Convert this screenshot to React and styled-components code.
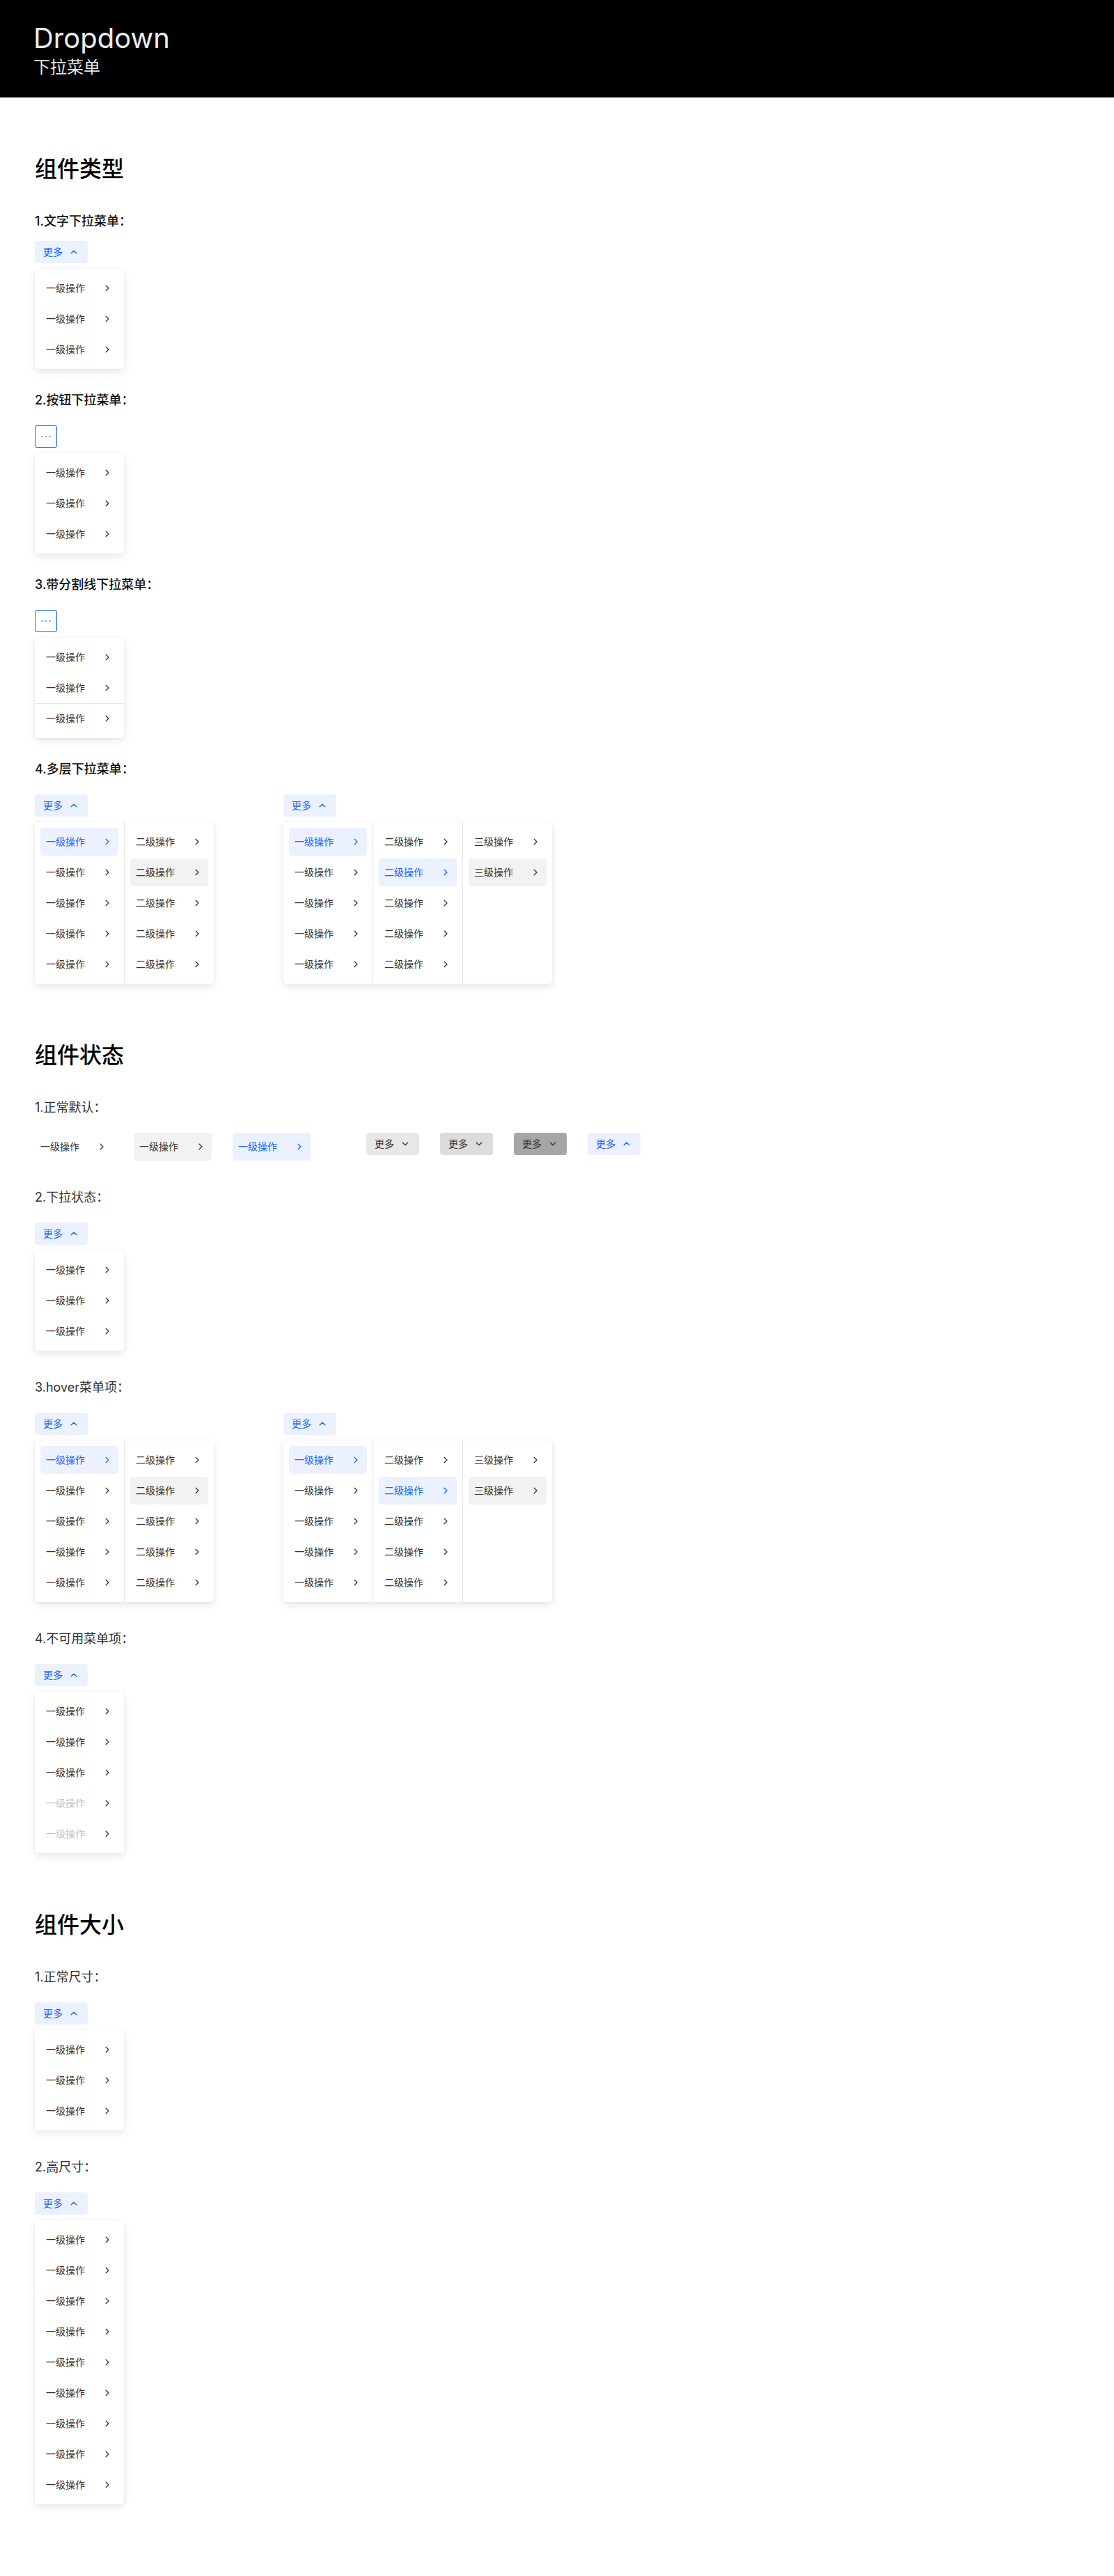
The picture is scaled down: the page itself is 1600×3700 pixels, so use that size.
import React from "react";
import styled, { createGlobalStyle, css } from "styled-components";

const BLUE = "#1664FF";
const BLUE_BG = "#EBF1FF";
const HOVER_BG = "#F2F2F2";
const TEXT = "#333333";
const DISABLED = "#C4C4C4";

const GlobalStyle = createGlobalStyle`
  * { box-sizing: border-box; }
  html, body { margin: 0; padding: 0; background: #fff; }
  body {
    font-family: Inter, "Noto Sans CJK SC", sans-serif;
    color: #000;
    -webkit-font-smoothing: antialiased;
  }
`;

const Header = styled.header`
  height: 140px;
  background: #000;
  padding: 31px 48px 0;
`;

const Title = styled.h1`
  margin: 0;
  font-size: 40px;
  line-height: 48px;
  font-weight: 400;
  color: #ececec;
`;

const Subtitle = styled.div`
  margin-top: 2px;
  font-size: 24px;
  line-height: 32px;
  font-weight: 400;
  color: #e6e6e6;
`;

const Main = styled.main`
  padding: 0 50px 80px;
`;

const Section = styled.section`
  display: flex;
  flex-direction: column;
  padding-top: 81px;
`;

const SectionTitle = styled.h2`
  margin: 0 0 40px;
  height: 44px;
  font-size: 32px;
  line-height: 44px;
  font-weight: 500;
  color: #000;
`;

const DemoList = styled.div`
  display: flex;
  flex-direction: column;
  gap: ${(p) => p.$gap}px;
`;

const Demo = styled.div`
  display: flex;
  flex-direction: column;
  align-items: flex-start;
  gap: ${(p) => p.$labelGap ?? 23}px;
`;

const Label = styled.div`
  height: 26px;
  font-size: 18px;
  line-height: 26px;
  font-weight: ${(p) => (p.$strong ? 500 : 400)};
  color: ${(p) => (p.$strong ? "#111" : "#333")};
`;

const DropWrap = styled.div`
  display: flex;
  flex-direction: column;
  align-items: flex-start;
  gap: 8px;
`;

const DemoRow = styled.div`
  display: flex;
  align-items: flex-start;
  gap: ${(p) => p.$gap || 30}px;
`;

const Group = styled.div`
  display: flex;
  align-items: center;
  gap: 30px;
`;

const buttonVariants = {
  open: css`
    background: ${BLUE_BG};
    color: ${BLUE};
  `,
  default: css`
    background: #e8e8e8;
    color: ${TEXT};
  `,
  hover: css`
    background: #dcdcdc;
    color: ${TEXT};
  `,
  pressed: css`
    background: #a6a6a6;
    color: ${TEXT};
  `,
};

const MoreButton = styled.button`
  display: inline-flex;
  align-items: center;
  gap: 8px;
  height: 32px;
  padding: 0 12px;
  border: none;
  border-radius: 4px;
  font-family: inherit;
  font-size: 14px;
  line-height: 22px;
  cursor: pointer;
  ${(p) => buttonVariants[p.$variant || "open"]}
`;

const IconButton = styled.button`
  display: inline-flex;
  align-items: center;
  justify-content: center;
  width: 32px;
  height: 32px;
  padding: 0;
  border: 1px solid ${BLUE};
  border-radius: 3px;
  background: #fff;
  color: #3a7cff;
  cursor: pointer;
`;

const Menu = styled.div`
  display: inline-flex;
  align-items: stretch;
  background: #fff;
  border-radius: 4px;
  box-shadow: 0 0 1px rgba(0, 0, 0, 0.14), 0 4px 12px rgba(0, 0, 0, 0.1);
`;

const Column = styled.div`
  display: flex;
  flex-direction: column;
  gap: 4px;
  width: 128px;
  padding: 8px;

  & + & {
    width: 129px;
    border-left: 1px solid #e6e6e6;
  }
`;

const itemStates = {
  normal: css`
    background: transparent;
    color: ${TEXT};
  `,
  hover: css`
    background: ${HOVER_BG};
    color: ${TEXT};
  `,
  active: css`
    background: ${BLUE_BG};
    color: ${BLUE};
  `,
  disabled: css`
    background: transparent;
    color: ${DISABLED};
  `,
};

const Item = styled.div`
  display: flex;
  align-items: center;
  justify-content: space-between;
  width: 112px;
  height: 40px;
  padding: 0 8px;
  border-radius: 4px;
  font-size: 14px;
  line-height: 22px;
  flex-shrink: 0;
  ${(p) => itemStates[p.$state || "normal"]}
`;

const Arrow = styled.span`
  display: inline-flex;
  width: 16px;
  height: 16px;
  color: ${(p) => (p.$state === "active" ? BLUE : TEXT)};
`;

const Divider = styled.div`
  height: 1px;
  margin: -2px -8px -3px;
  background: #e6e6e6;
`;

const ChevronRight = () => (
  <svg width="16" height="16" viewBox="0 0 16 16" fill="none">
    <path d="M6.2 4.2L10 8l-3.8 3.8" stroke="currentColor" strokeWidth="1.3" strokeLinecap="round" strokeLinejoin="round" />
  </svg>
);

const ChevronUp = () => (
  <svg width="16" height="16" viewBox="0 0 16 16" fill="none">
    <path d="M4.2 9.8L8 6.2l3.8 3.6" stroke="currentColor" strokeWidth="1.4" strokeLinecap="round" strokeLinejoin="round" />
  </svg>
);

const ChevronDown = () => (
  <svg width="16" height="16" viewBox="0 0 16 16" fill="none">
    <path d="M4.4 6.2L8 9.8l3.6-3.6" stroke="currentColor" strokeWidth="1.3" strokeLinecap="round" strokeLinejoin="round" />
  </svg>
);

const Dots = () => (
  <svg width="16" height="16" viewBox="0 0 16 16" fill="currentColor">
    <circle cx="2.5" cy="8" r="1" />
    <circle cx="8" cy="8" r="1" />
    <circle cx="13.5" cy="8" r="1" />
  </svg>
);

const MenuItem = ({ text, state = "normal" }) => (
  <Item $state={state}>
    <span>{text}</span>
    <Arrow $state={state}>
      <ChevronRight />
    </Arrow>
  </Item>
);

const More = ({ variant = "open" }) => (
  <MoreButton $variant={variant}>
    <span>更多</span>
    {variant === "open" ? <ChevronUp /> : <ChevronDown />}
  </MoreButton>
);

const L1 = "一级操作";
const L2 = "二级操作";
const L3 = "三级操作";

const SimpleMenu = ({ count = 3, states = {}, dividerBefore }) => (
  <Menu>
    <Column>
      {Array.from({ length: count }).map((_, i) => (
        <React.Fragment key={i}>
          {dividerBefore === i && <Divider />}
          <MenuItem text={L1} state={states[i] || "normal"} />
        </React.Fragment>
      ))}
    </Column>
  </Menu>
);

const TwoLevel = () => (
  <DropWrap>
    <More />
    <Menu>
      <Column>
        {[0, 1, 2, 3, 4].map((i) => (
          <MenuItem key={i} text={L1} state={i === 0 ? "active" : "normal"} />
        ))}
      </Column>
      <Column>
        {[0, 1, 2, 3, 4].map((i) => (
          <MenuItem key={i} text={L2} state={i === 1 ? "hover" : "normal"} />
        ))}
      </Column>
    </Menu>
  </DropWrap>
);

const ThreeLevel = () => (
  <DropWrap>
    <More />
    <Menu>
      <Column>
        {[0, 1, 2, 3, 4].map((i) => (
          <MenuItem key={i} text={L1} state={i === 0 ? "active" : "normal"} />
        ))}
      </Column>
      <Column>
        {[0, 1, 2, 3, 4].map((i) => (
          <MenuItem key={i} text={L2} state={i === 1 ? "active" : "normal"} />
        ))}
      </Column>
      <Column>
        {[0, 1].map((i) => (
          <MenuItem key={i} text={L3} state={i === 1 ? "hover" : "normal"} />
        ))}
      </Column>
    </Menu>
  </DropWrap>
);

const MultiLevel = () => (
  <DemoRow $gap={100}>
    <TwoLevel />
    <ThreeLevel />
  </DemoRow>
);

export default function App() {
  return (
    <>
      <GlobalStyle />
      <Header>
        <Title>Dropdown</Title>
        <Subtitle>下拉菜单</Subtitle>
      </Header>
      <Main>
        <Section>
          <SectionTitle>组件类型</SectionTitle>
          <DemoList $gap={32}>
            <Demo $labelGap={15}>
              <Label $strong>1.文字下拉菜单：</Label>
              <DropWrap>
                <More />
                <SimpleMenu />
              </DropWrap>
            </Demo>
            <Demo>
              <Label $strong>2.按钮下拉菜单：</Label>
              <DropWrap>
                <IconButton>
                  <Dots />
                </IconButton>
                <SimpleMenu />
              </DropWrap>
            </Demo>
            <Demo>
              <Label $strong>3.带分割线下拉菜单：</Label>
              <DropWrap>
                <IconButton>
                  <Dots />
                </IconButton>
                <SimpleMenu dividerBefore={2} />
              </DropWrap>
            </Demo>
            <Demo>
              <Label $strong>4.多层下拉菜单：</Label>
              <MultiLevel />
            </Demo>
          </DemoList>
        </Section>

        <Section>
          <SectionTitle>组件状态</SectionTitle>
          <DemoList $gap={40}>
            <Demo>
              <Label>1.正常默认：</Label>
              <DemoRow $gap={80}>
                <Group>
                  <MenuItem text={L1} state="normal" />
                  <MenuItem text={L1} state="hover" />
                  <MenuItem text={L1} state="active" />
                </Group>
                <Group>
                  <More variant="default" />
                  <More variant="hover" />
                  <More variant="pressed" />
                  <More variant="open" />
                </Group>
              </DemoRow>
            </Demo>
            <Demo>
              <Label>2.下拉状态：</Label>
              <DropWrap>
                <More />
                <SimpleMenu />
              </DropWrap>
            </Demo>
            <Demo>
              <Label>3.hover菜单项：</Label>
              <MultiLevel />
            </Demo>
            <Demo>
              <Label>4.不可用菜单项：</Label>
              <DropWrap>
                <More />
                <SimpleMenu count={5} states={{ 3: "disabled", 4: "disabled" }} />
              </DropWrap>
            </Demo>
          </DemoList>
        </Section>

        <Section>
          <SectionTitle>组件大小</SectionTitle>
          <DemoList $gap={40}>
            <Demo>
              <Label>1.正常尺寸：</Label>
              <DropWrap>
                <More />
                <SimpleMenu />
              </DropWrap>
            </Demo>
            <Demo>
              <Label>2.高尺寸：</Label>
              <DropWrap>
                <More />
                <SimpleMenu count={9} />
              </DropWrap>
            </Demo>
          </DemoList>
        </Section>
      </Main>
    </>
  );
}
